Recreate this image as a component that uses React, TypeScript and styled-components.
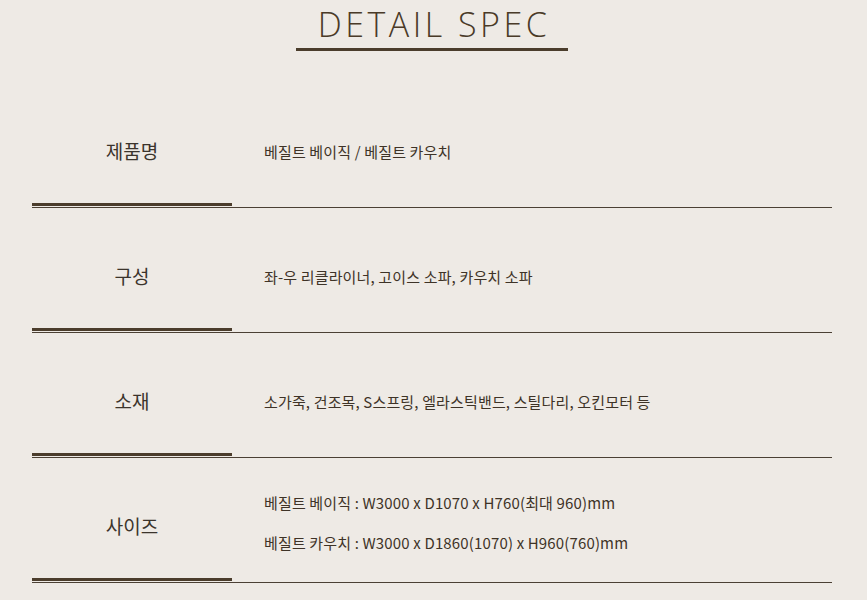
import React from 'react';
import styled, { createGlobalStyle } from 'styled-components';

const GlobalStyle = createGlobalStyle`
    html, body {
        margin: 0;
        padding: 0;
        background-color: #eeeae5;
    }
    body {
        font-family: "Noto Sans CJK KR", "Noto Sans", sans-serif;
        color: #3e3327;
    }
`;

// Štýlované komponenty
const Page = styled.div`
    width: 800px;
    padding: 4px 0 0 32px;
`;

const TitleWrap = styled.div`
    display: flex;
    justify-content: center;
    margin-bottom: 32px;
`;

const Title = styled.h2`
    margin: 0;
    padding: 0 18px 4px 22px;
    font-family: "Open Sans", "Noto Sans", sans-serif;
    font-weight: 300;
    font-size: 34px;
    line-height: 40px;
    letter-spacing: 3.5px;
    color: #4a3a28;
    border-bottom: 3px solid #4b3d2c;
`;

const Row = styled.div`
    display: grid;
    grid-template-columns: 200px 1fr;
    height: 124px;
    border-bottom: 1px solid #4b4034;
`;

const Label = styled.div`
    display: flex;
    align-items: center;
    justify-content: center;
    padding-top: 14px;
    font-size: 19px;
    color: #3b342c;
    border-bottom: 3px solid #4b3d2c;
    margin-bottom: 1px;
`;

const Value = styled.div<{ multi?: boolean }>`
    display: flex;
    flex-direction: column;
    justify-content: center;
    gap: 16px;
    padding: 14px 0 ${p => (p.multi ? 8 : 0)}px 32px;
    font-size: 15px;
    line-height: 24px;
    letter-spacing: 0.15px;
    color: #3e3327;
`;

type SpecRow = {
    label: string;
    lines: string[];
};

const specs: SpecRow[] = [
    { label: '제품명', lines: ['베질트 베이직 / 베질트 카우치'] },
    { label: '구성', lines: ['좌-우 리클라이너, 고이스 소파, 카우치 소파'] },
    { label: '소재', lines: ['소가죽, 건조목, S스프링, 엘라스틱밴드, 스틸다리, 오킨모터 등'] },
    {
        label: '사이즈',
        lines: [
            '베질트 베이직 : W3000 x D1070 x H760(최대 960)mm',
            '베질트 카우치 : W3000 x D1860(1070) x H960(760)mm',
        ],
    },
];

const App: React.FC = () => {
    return (
        <Page>
            <GlobalStyle />
            <TitleWrap>
                <Title>DETAIL SPEC</Title>
            </TitleWrap>
            {specs.map((spec) => (
                <Row key={spec.label}>
                    <Label>{spec.label}</Label>
                    <Value multi={spec.lines.length > 1}>
                        {spec.lines.map((line) => (
                            <span key={line}>{line}</span>
                        ))}
                    </Value>
                </Row>
            ))}
        </Page>
    );
};

export default App;
